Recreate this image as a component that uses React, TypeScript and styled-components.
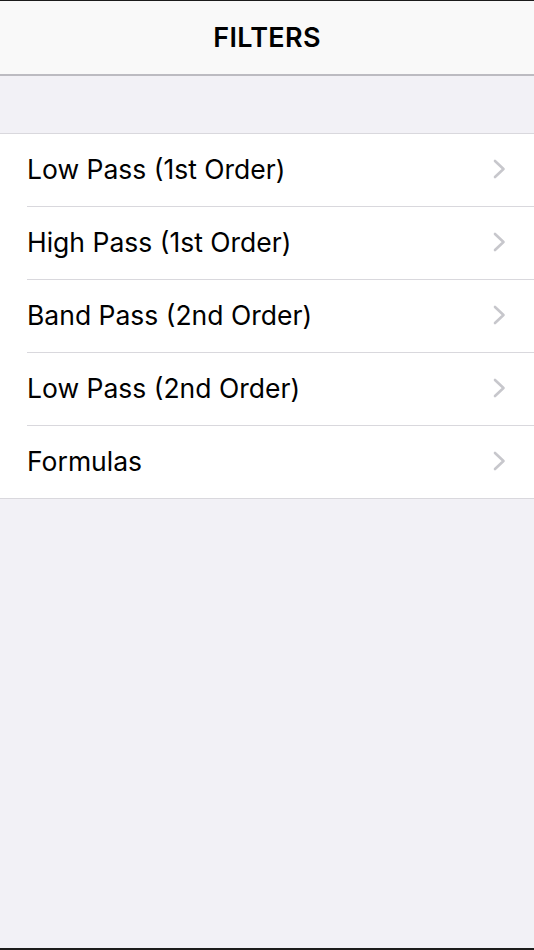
import styled, { createGlobalStyle } from "styled-components";

const GlobalStyle = createGlobalStyle`
  html, body {
    margin: 0;
    padding: 0;
    background: #1c1c1c;
  }
  #root {
    height: 950px;
  }
`;

const Screen = styled.div`
  height: 950px;
  box-sizing: border-box;
  border-top: 1px solid #1c1c1c;
  border-bottom: 2px solid #1c1c1c;
  background: #f2f1f6;
  display: flex;
  flex-direction: column;
  font-family: Inter, "Liberation Sans", sans-serif;
`;

const NavBar = styled.header`
  height: 73px;
  background: #f9f9f9;
  border-bottom: 2px solid #bcbbc1;
  display: flex;
  align-items: center;
  justify-content: center;
`;

const Title = styled.h1`
  margin: 0;
  font-size: 27px;
  font-weight: 600;
  color: #000;
  letter-spacing: 0.3px;
`;

const List = styled.ul`
  margin: 57px 0 0;
  padding: 0;
  list-style: none;
  background: #fff;
  border-top: 1px solid #d9d8dd;
  border-bottom: 1px solid #d9d8dd;
`;

const Row = styled.li<{ $last?: boolean }>`
  height: 72px;
  margin-left: 27px;
  padding-right: 28px;
  display: flex;
  align-items: center;
  justify-content: space-between;
  border-bottom: ${(p) => (p.$last ? "none" : "1px solid #d9d8dd")};
`;

const Label = styled.span`
  font-size: 26.5px;
  color: #000;
  margin-top: -3px;
`;

const Chevron = () => (
  <svg width="13" height="20" viewBox="0 0 13 20" fill="none" style={{ marginTop: -3 }}>
    <path d="M2 2l8.5 8-8.5 8" stroke="#c7c7cc" strokeWidth="2.6" strokeLinecap="round" strokeLinejoin="round" />
  </svg>
);

const items = [
  "Low Pass (1st Order)",
  "High Pass (1st Order)",
  "Band Pass (2nd Order)",
  "Low Pass (2nd Order)",
  "Formulas",
];

export default function App() {
  return (
    <>
      <GlobalStyle />
      <Screen>
        <NavBar>
          <Title>FILTERS</Title>
        </NavBar>
        <List>
          {items.map((item, i) => (
            <Row key={item} $last={i === items.length - 1}>
              <Label>{item}</Label>
              <Chevron />
            </Row>
          ))}
        </List>
      </Screen>
    </>
  );
}
